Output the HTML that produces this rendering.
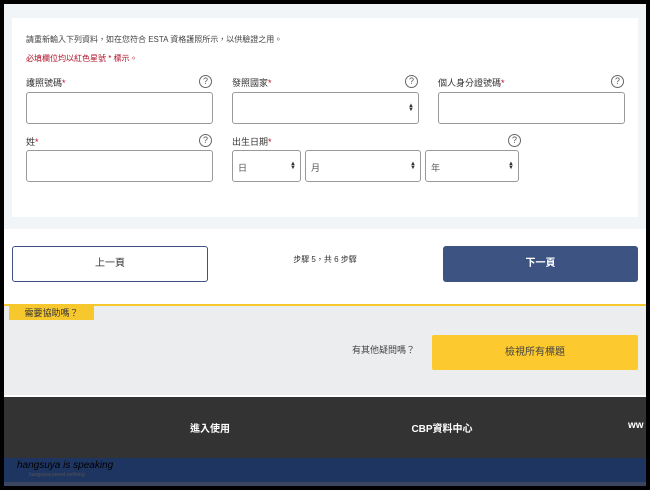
<!DOCTYPE html>
<html><head><meta charset="utf-8"><style>
*{box-sizing:border-box;margin:0;padding:0}
body{width:650px;height:490px;background:#000;position:relative;overflow:hidden;font-family:"Liberation Sans","Noto Sans CJK TC",sans-serif;}
.a{position:absolute}
.frame{left:4px;top:4px;width:642px;height:482px;background:#fff;overflow:hidden}
.lbl{font-size:9px;color:#333}
.lbl b{color:#b0122a;font-weight:normal}
.q{width:13px;height:13px;border:1px solid #666;border-radius:50%;font-size:9px;text-align:center;line-height:11px;color:#555}
.in{border:1.5px solid #999;border-radius:3px;background:#fff;height:32px}
.arr{font-size:6px;color:#333;line-height:4px;text-align:center}
.sel{font-size:9px;color:#555;padding:10px 0 0 5px}
</style></head><body>
<div class="a frame">
<div class="a" style="left:0;top:0;width:642px;height:225px;background:#f1f5f8"></div>
<div class="a" style="left:8px;top:14px;width:626px;height:199px;background:#fff"></div>
</div>
<div class="a" style="left:26px;top:34px;font-size:8px;color:#444">請重新輸入下列資料，如在您符合 ESTA 資格護照所示，以供驗證之用。</div>
<div class="a" style="left:26px;top:53px;font-size:8px;color:#b0122a">必填欄位均以紅色星號 * 標示。</div>

<div class="a lbl" style="left:26px;top:76px">護照號碼<b>*</b></div>
<div class="a q" style="left:199px;top:75px">?</div>
<div class="a in" style="left:26px;top:92px;width:187px"></div>
<div class="a lbl" style="left:232px;top:76px">發照國家<b>*</b></div>
<div class="a q" style="left:405px;top:75px">?</div>
<div class="a in" style="left:232px;top:92px;width:187px"><div class="a arr" style="right:4px;top:11px">▲<br>▼</div></div>
<div class="a lbl" style="left:438px;top:76px">個人身分證號碼<b>*</b></div>
<div class="a q" style="left:611px;top:75px">?</div>
<div class="a in" style="left:438px;top:92px;width:187px"></div>

<div class="a lbl" style="left:26px;top:135px">姓<b>*</b></div>
<div class="a q" style="left:199px;top:134px">?</div>
<div class="a in" style="left:26px;top:150px;width:187px"></div>
<div class="a lbl" style="left:232px;top:135px">出生日期<b>*</b></div>
<div class="a q" style="left:508px;top:134px">?</div>
<div class="a in sel" style="left:232px;top:150px;width:69px">日<div class="a arr" style="right:4px;top:11px">▲<br>▼</div></div>
<div class="a in sel" style="left:305px;top:150px;width:116px">月<div class="a arr" style="right:4px;top:11px">▲<br>▼</div></div>
<div class="a in sel" style="left:425px;top:150px;width:94px">年<div class="a arr" style="right:4px;top:11px">▲<br>▼</div></div>

<div class="a" style="left:12px;top:246px;width:196px;height:36px;border:1.5px solid #3d5482;border-radius:3px;font-size:10px;text-align:center;line-height:33px;color:#333">上一頁</div>
<div class="a" style="left:270px;top:254px;width:110px;font-size:8px;text-align:center;color:#333">步驟 5，共 6 步驟</div>
<div class="a" style="left:443px;top:246px;width:195px;height:36px;background:#3d5482;border-radius:3px;font-size:10px;font-weight:bold;text-align:center;line-height:36px;color:#fff">下一頁</div>

<div class="a" style="left:4px;top:304px;width:642px;height:91px;background:#ecedee;border-top:2px solid #f7c82e"></div>
<div class="a" style="left:9px;top:306px;width:85px;height:14px;background:#f7c82e;font-size:9px;text-align:center;line-height:14px;color:#333">需要協助嗎？</div>
<div class="a" style="left:330px;top:343px;width:85px;font-size:9px;text-align:right;color:#444">有其他疑問嗎？</div>
<div class="a" style="left:432px;top:335px;width:206px;height:35px;background:#fcc92e;border-radius:2px;font-size:10px;text-align:center;line-height:35px;color:#444">檢視所有標題</div>

<div class="a" style="left:4px;top:397px;width:642px;height:61px;background:#333"></div>
<div class="a" style="left:170px;top:420px;width:80px;text-align:center;font-size:10px;font-weight:bold;color:#fff">進入使用</div>
<div class="a" style="left:400px;top:420px;width:84px;text-align:center;font-size:10px;font-weight:bold;color:#fff">CBP資料中心</div>
<div class="a" style="left:628px;top:420px;font-size:10px;font-weight:bold;color:#fff">ww</div>
<div class="a" style="left:4px;top:458px;width:642px;height:24px;background:#1e3461"></div>
<div class="a" style="left:4px;top:482px;width:642px;height:4px;background:#3a4660"></div>
<div class="a" style="left:17px;top:460px;font-size:10px;color:#000;font-style:italic">hangsuya is speaking</div>
<div class="a" style="left:29px;top:472px;font-size:5px;color:#555">hangsuya.pixnet.net/blog</div>
</body></html>
